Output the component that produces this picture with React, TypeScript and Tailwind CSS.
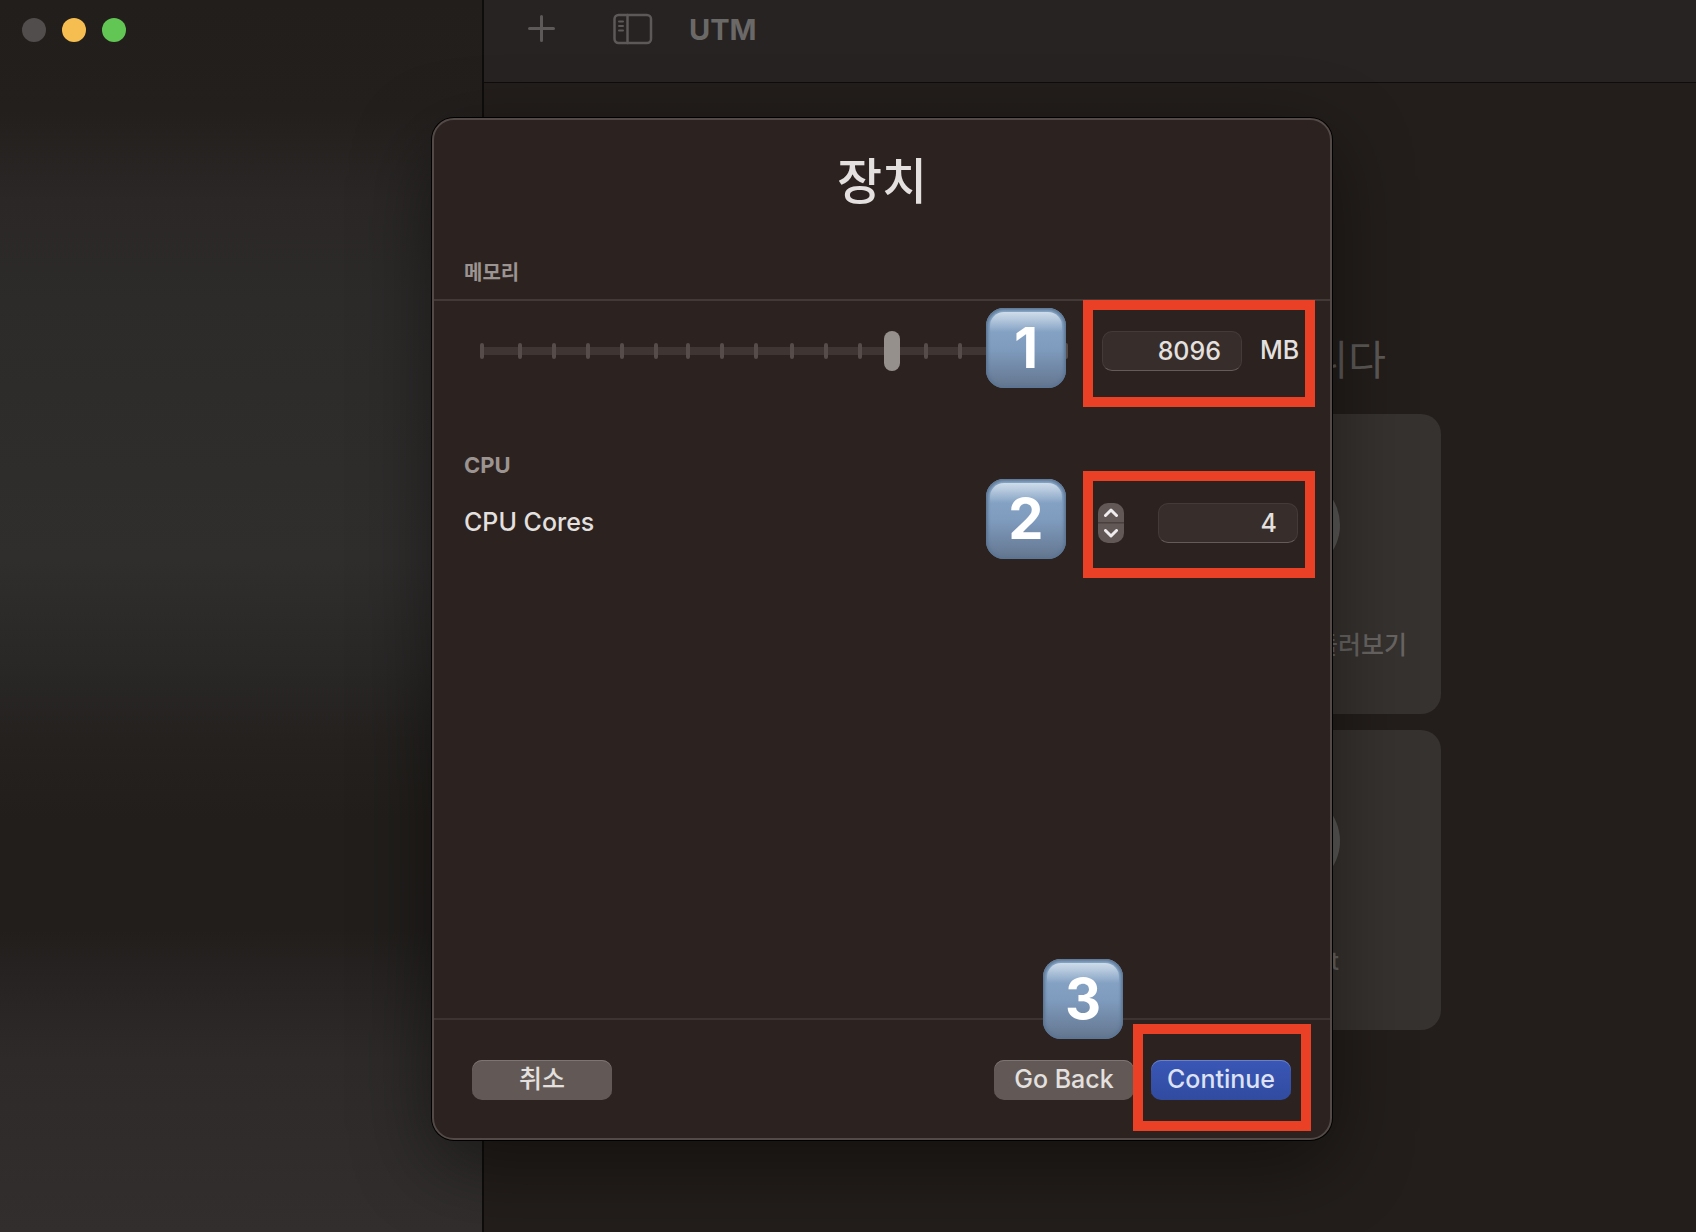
import { useState } from "react";

// Tick positions along the memory slider track, in track units
const TRACK_LENGTH = 588;
const TICKS = [2, 40, 74, 108, 142, 176, 208, 242, 276, 312, 346, 380, 412, 446, 480, 514, 548, 586];

const StepBadge = ({ step, className }: { step: number; className: string }) => (
  <div
    className={`absolute z-10 flex size-20 items-center justify-center rounded-[18px] bg-linear-to-b from-[#8ba9c9] via-[#7f9cbf] to-[#64768f] shadow-[inset_0_0_3px_2px_#5b7593] ${className}`}
  >
    <div className="absolute inset-x-1 top-1 h-5 rounded-t-[14px] bg-linear-to-b from-[#cfdcea] to-[#8aa8c800]" />
    <span className="relative text-[56px] leading-none font-bold text-white">{step}</span>
  </div>
);

const Highlight = ({ className }: { className: string }) => (
  <div className={`pointer-events-none absolute h-[107px] border-10 border-[#ea4026] ${className}`} />
);

const WelcomeCard = ({ label }: { label?: string }) => (
  <a
    href="#"
    className="flex h-[300px] w-[300px] flex-col items-center rounded-[20px] bg-[#36322f] pt-[62px] text-[25px] leading-8 font-medium text-[#686563]"
  >
    <span className="mb-[55px] size-[98px] rounded-full bg-[#5c5a58]" />
    {label}
  </a>
);

const MemorySlider = () => {
  const [position, setPosition] = useState(12);

  return (
    <div className="relative h-10 flex-1">
      <div className="absolute inset-x-0 top-4 h-2 rounded-sm bg-[#3f3533]" />
      {TICKS.map((tick) => (
        <span
          key={tick}
          className="absolute top-3 h-4 w-1 -translate-x-1/2 rounded-sm bg-[#564c4a]"
          style={{ left: `${(tick / TRACK_LENGTH) * 100}%` }}
        />
      ))}
      <input
        type="range"
        aria-label="메모리"
        min={0}
        max={17}
        step={1}
        value={position}
        onChange={(e) => setPosition(Number(e.target.value))}
        className="absolute inset-0 h-10 w-full appearance-none bg-transparent [&::-webkit-slider-thumb]:h-10 [&::-webkit-slider-thumb]:w-4 [&::-webkit-slider-thumb]:appearance-none [&::-webkit-slider-thumb]:rounded-full [&::-webkit-slider-thumb]:bg-[#96908d]"
      />
    </div>
  );
};

const fieldStyles =
  "h-10 w-[140px] rounded-[10px] border border-[#443a37] border-b-[#655c5a] bg-[#372d2a] pr-5 text-right text-[25px] font-medium text-[#e3e0df] outline-none";

const buttonStyles =
  "flex h-10 w-[140px] items-center justify-center rounded-[10px] pb-0.5 text-[25px] leading-8 font-medium";

const App = () => {
  const [memory, setMemory] = useState("8096");
  const [cores, setCores] = useState(4);

  return (
    <div className="relative flex min-h-screen overflow-hidden bg-[#231e1b] font-['Inter','Noto_Sans_CJK_KR',sans-serif]">
      {/* Sidebar */}
      <aside className="w-[484px] shrink-0 border-r-2 border-[#0f0d0c] bg-[linear-gradient(to_bottom,#221e1c_0px,#231f1d_110px,#2a2726_200px,#2d2b2a_300px,#302d2d_560px,#2a2827_660px,#24211f_740px,#211e1b_820px,#211e1c_930px,#262322_980px,#2d2a29_1060px,#312e2d_1232px)]">
        <div className="flex gap-4 px-[22px] pt-[18px]">
          <button aria-label="Close" className="size-6 rounded-full bg-[#514d4c]" />
          <button aria-label="Minimize" className="size-6 rounded-full bg-[#f6be50]" />
          <button aria-label="Zoom" className="size-6 rounded-full bg-[#62c655]" />
        </div>
      </aside>

      {/* Main window */}
      <main className="min-w-0 flex-1">
        <header className="flex h-[83px] items-start border-b border-[#0f0d0c] bg-[#272322] pl-11 text-[#5c5958]">
          <button aria-label="Add" className="mt-[15px]">
            <svg width="28" height="28" viewBox="0 0 28 28" fill="none" stroke="currentColor" strokeWidth="3" strokeLinecap="round">
              <path d="M13.5 1.5v24M1.5 13.5h24" />
            </svg>
          </button>
          <button aria-label="Toggle sidebar" className="mt-[13px] ml-[57px]">
            <svg width="40" height="32" viewBox="0 0 40 32" fill="none" stroke="currentColor" strokeWidth="2.5" strokeLinecap="round">
              <rect x="1.5" y="2" width="36.5" height="28" rx="4" />
              <path d="M14.5 2v28" />
              <path strokeWidth="2" d="M6 8.5h4M6 13h4M6 17.5h4" />
            </svg>
          </button>
          <h1 className="mt-3 ml-9 text-[29px] leading-9 font-bold text-[#6b6968]">UTM</h1>
        </header>

        <section className="flex flex-col items-center pt-[247px] pl-[86px]">
          <h2 className="mb-6 text-[41px] leading-[60px] whitespace-nowrap text-[#5c5957]">UTM에 오신 것을 환영합니다</h2>
          <div className="grid grid-cols-2 gap-4">
            <WelcomeCard />
            <WelcomeCard label="UTM 갤러리 둘러보기" />
            <WelcomeCard />
            <WelcomeCard label="Support" />
          </div>
        </section>
      </main>

      {/* Setup sheet */}
      <div className="absolute inset-0 flex items-start justify-center pt-[118px] pl-[68px]">
        <div
          role="dialog"
          aria-labelledby="sheet-title"
          className="flex min-h-[1022px] w-full max-w-[900px] flex-col rounded-[22px] border-2 border-[#534a48] bg-[#2c2220] text-[25px] font-medium text-[#e3e0df] shadow-[0_0_0_1px_#000,0_24px_80px_rgba(0,0,0,0.45)]"
        >
          <div className="border-b-2 border-[#433937] px-[30px] pt-8 pb-3">
            <h2 id="sheet-title" className="text-center text-[49px] leading-[60px]">장치</h2>
            <h3 className="mt-[47px] text-xl leading-7 font-bold text-[#9b9491]">메모리</h3>
          </div>

          <div className="flex-1">
            <div className="relative flex items-center pt-[30px] pr-[30px] pl-[46px]">
              <MemorySlider />
              <StepBadge step={1} className="top-[7px] right-[264px]" />
              <input
                id="memory"
                value={memory}
                onChange={(e) => setMemory(e.target.value)}
                className={`ml-[34px] ${fieldStyles}`}
              />
              <label htmlFor="memory" className="ml-[18px] w-10">MB</label>
              <Highlight className="-top-px right-[15px] w-[232px]" />
            </div>

            <h3 className="mt-20 px-[30px] text-[22px] leading-7 font-bold text-[#9b9491]">CPU</h3>
            <div className="relative mt-6 flex items-center pr-8 pl-[30px]">
              <label htmlFor="cores" className="flex-1">CPU Cores</label>
              <StepBadge step={2} className="-top-6 right-[264px]" />
              <div className="flex h-10 w-[26px] flex-col overflow-hidden rounded-[10px] bg-[#625956] text-[#eeecec]">
                <button
                  aria-label="Increase"
                  onClick={() => setCores(cores + 1)}
                  className="flex flex-1 items-center justify-center border-b border-[#4a413f]"
                >
                  <svg width="14" height="9" viewBox="0 0 14 9" fill="none" stroke="currentColor" strokeWidth="3" strokeLinecap="round" strokeLinejoin="round">
                    <path d="M1.5 7.5 7 2l5.5 5.5" />
                  </svg>
                </button>
                <button
                  aria-label="Decrease"
                  onClick={() => setCores(Math.max(1, cores - 1))}
                  className="flex flex-1 items-center justify-center border-t border-[#554c4a]"
                >
                  <svg width="14" height="9" viewBox="0 0 14 9" fill="none" stroke="currentColor" strokeWidth="3" strokeLinecap="round" strokeLinejoin="round">
                    <path d="M1.5 1.5 7 7l5.5-5.5" />
                  </svg>
                </button>
              </div>
              <input
                id="cores"
                value={cores}
                onChange={(e) => setCores(Number(e.target.value))}
                className={`ml-[34px] ${fieldStyles}`}
              />
              <Highlight className="-top-8 right-[15px] w-[232px]" />
            </div>
          </div>

          <footer className="relative flex gap-[17px] border-t-2 border-[#3d3331] pt-10 pr-[39px] pb-[38px] pl-[38px]">
            <button className={`mr-auto bg-[#625956] shadow-[inset_0_1px_0_#7d7573] ${buttonStyles}`}>취소</button>
            <button className={`bg-[#625956] shadow-[inset_0_1px_0_#7d7573] ${buttonStyles}`}>Go Back</button>
            <button
              className={`bg-linear-to-b from-[#3a57b7] to-[#304b9f] text-[#dde2f3] shadow-[inset_0_1px_0_#6a80c8] ${buttonStyles}`}
            >
              Continue
            </button>
            <StepBadge step={3} className="-top-[61px] right-[207px]" />
            <Highlight className="top-1 right-[19px] w-[178px]" />
          </footer>
        </div>
      </div>
    </div>
  );
};

export default App;
